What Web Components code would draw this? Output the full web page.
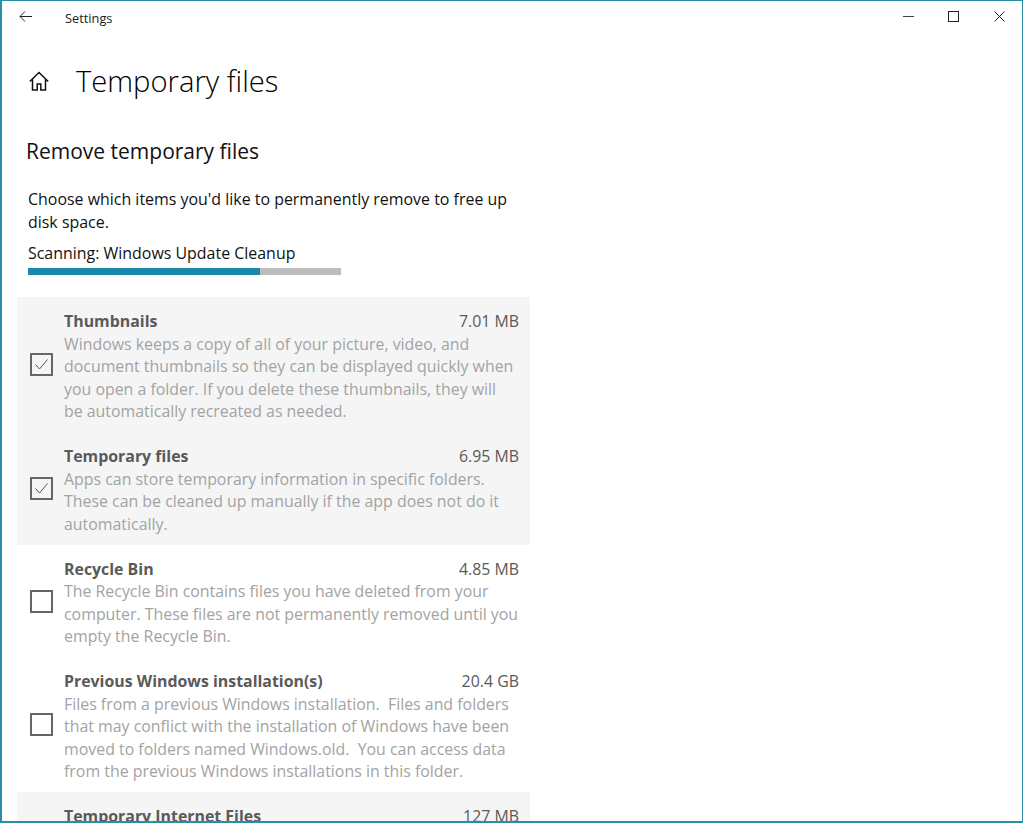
<!DOCTYPE html>
<html>
<head>
<meta charset="utf-8">
<title>Settings</title>
<style>
  html, body { margin: 0; padding: 0; height: 100%; background: #fff; overflow: hidden; }
  body { font-family: "Open Sans", "Noto Sans", sans-serif; color: #111; }
</style>
</head>
<body>
<template id="settings-window-tpl">
  <style>
    :host { display: flex; flex-direction: column; box-sizing: border-box; width: 1023px; height: 823px; overflow: hidden; background: #fff; border: solid #2b8ea6; border-width: 1px 1px 2px 2px; }
  </style>
  <slot name="bar"></slot>
  <slot></slot>
</template>

<template id="title-bar-tpl">
  <style>
    :host { display: flex; align-items: center; height: 34px; flex: none; }
    .back { display: flex; width: 63px; padding-left: 17px; box-sizing: border-box; margin-top: -3px; }
    .label { flex: 1; font-size: 12.8px; color: #222; }
    .ctl { display: flex; width: 45px; justify-content: center; margin-top: -3px; }
    .ctl.close { width: 46px; }
    svg { display: block; fill: none; stroke: #222; stroke-width: 1; }
  </style>
  <div class="back">
    <svg width="13" height="11" viewBox="0 0 13 11"><path d="M13 5.5H1M6 .5l-5 5 5 5"/></svg>
  </div>
  <div class="label"><slot></slot></div>
  <div class="ctl"><svg width="11" height="11" viewBox="0 0 11 11"><path d="M0 5.5h11" stroke="#444"/></svg></div>
  <div class="ctl"><svg width="11" height="11" viewBox="0 0 11 11"><rect x=".5" y=".5" width="10" height="10"/></svg></div>
  <div class="ctl close"><svg width="11" height="11" viewBox="0 0 11 11"><path d="M.5 .5l10 10M10.5 .5l-10 10"/></svg></div>
</template>

<template id="page-head-tpl">
  <style>
    :host { display: flex; align-items: center; padding-left: 27px; height: 44px; margin-top: 24px; flex: none; }
    svg { display: block; fill: none; stroke: #111; stroke-width: 1.5; margin-right: 27px; }
    h1 { margin: 0; font-size: 29.2px; font-weight: 300; color: #000; line-height: 44px; white-space: nowrap; }
  </style>
  <svg width="20" height="20" viewBox="0 0 20 20"><path d="M.8 10.5L10 1.5l9.2 9M3.5 8v11h4.7v-6h3.6v6h4.7V8"/></svg>
  <h1><slot></slot></h1>
</template>

<template id="scan-panel-tpl">
  <style>
    :host { display: block; padding-left: 26px; margin-top: 33px; flex: none; }
    h2 { margin: 0 0 0 -2px; font-size: 21px; font-weight: 400; line-height: 30px; color: #111; white-space: nowrap; }
    p { margin: 22px 0 0; font-size: 15.95px; line-height: 23px; color: #111; white-space: nowrap; }
    .status { margin-top: 8px; font-size: 15.95px; line-height: 23px; color: #111; white-space: nowrap; }
    .track { margin-top: 3px; width: 313px; height: 7px; background: #bdbdbd; }
    .fill { width: 232px; height: 100%; background: #1b87ab; }
  </style>
  <h2><slot name="heading"></slot></h2>
  <p><slot name="intro"></slot></p>
  <div class="status"><slot name="status"></slot></div>
  <div class="track"><div class="fill"></div></div>
</template>

<template id="file-list-tpl">
  <style>
    :host { display: block; margin: 22px 0 0 15px; width: 513px; }
  </style>
  <slot></slot>
</template>

<template id="file-row-tpl">
  <style>
    :host { display: grid; grid-template-columns: 33px 1fr; align-items: center; box-sizing: border-box; padding: 13px 11px 9.5px 14px; white-space: nowrap; }
    :host([selected]) { background: #f5f5f5; }
    :host([tall]) { min-height: 135px; }
    .body { align-self: start; }
    .box { box-sizing: border-box; width: 23px; height: 23px; margin: 0 0 3px -1px; border: 2px solid #666; }
    .box svg { display: none; width: 19px; height: 19px; fill: none; stroke: #555; stroke-width: 1; }
    :host([checked]) .box svg { display: block; }
    .head { display: flex; justify-content: space-between; font-size: 15.9px; line-height: 22.5px; color: #5a5a5a; }
    .name { font-weight: 700; }
    .desc { font-size: 15.9px; line-height: 22.5px; color: #a3a3a3; }
  </style>
  <div class="box"><svg viewBox="0 0 19 19"><path d="M3.5 9.5l4 4.5 8-9.5"/></svg></div>
  <div class="body">
    <div class="head"><span class="name"></span><span class="size"></span></div>
    <div class="desc"><slot></slot></div>
  </div>
</template>

<settings-window>
  <title-bar slot="bar">Settings</title-bar>
  <page-head>Temporary files</page-head>
  <scan-panel>
    <span slot="heading">Remove temporary files</span>
    <span slot="intro">Choose which items you'd like to permanently remove to free up<br>disk space.</span>
    <span slot="status">Scanning: Windows Update Cleanup</span>
  </scan-panel>
  <file-list>
    <file-row name="Thumbnails" size="7.01 MB" selected checked>Windows keeps a copy of all of your picture, video, and<br>document thumbnails so they can be displayed quickly when<br>you open a folder. If you delete these thumbnails, they will<br>be automatically recreated as needed.</file-row>
    <file-row name="Temporary files" size="6.95 MB" selected checked>Apps can store temporary information in specific folders.<br>These can be cleaned up manually if the app does not do it<br>automatically.</file-row>
    <file-row name="Recycle Bin" size="4.85 MB">The Recycle Bin contains files you have deleted from your<br>computer. These files are not permanently removed until you<br>empty the Recycle Bin.</file-row>
    <file-row name="Previous Windows installation(s)" size="20.4 GB">Files from a previous Windows installation.&nbsp; Files and folders<br>that may conflict with the installation of Windows have been<br>moved to folders named Windows.old.&nbsp; You can access data<br>from the previous Windows installations in this folder.</file-row>
    <file-row name="Temporary Internet Files" size="127 MB" selected tall></file-row>
  </file-list>
</settings-window>
<script>
  class Templated extends HTMLElement {
    constructor() {
      super();
      const tpl = document.getElementById(this.localName + "-tpl");
      this.attachShadow({ mode: "open" }).appendChild(tpl.content.cloneNode(true));
    }
  }
  customElements.define("settings-window", class extends Templated {});
  customElements.define("title-bar", class extends Templated {});
  customElements.define("page-head", class extends Templated {});
  customElements.define("scan-panel", class extends Templated {});
  customElements.define("file-list", class extends Templated {});
  customElements.define("file-row", class extends Templated {
    connectedCallback() {
      this.shadowRoot.querySelector(".name").textContent = this.getAttribute("name");
      this.shadowRoot.querySelector(".size").textContent = this.getAttribute("size");
    }
  });
</script>
</body>
</html>
